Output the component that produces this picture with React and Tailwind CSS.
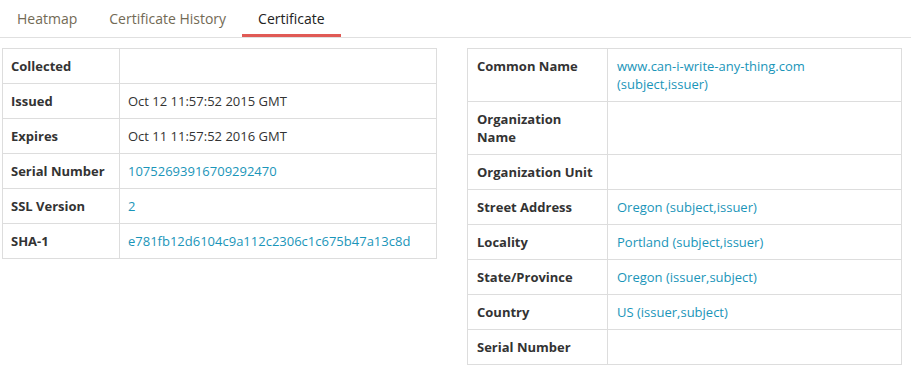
import React from 'react';

const tabs = ['Heatmap', 'Certificate History', 'Certificate'];

const leftRows = [
  { label: 'Collected', value: '' },
  { label: 'Issued', value: 'Oct 12 11:57:52 2015 GMT' },
  { label: 'Expires', value: 'Oct 11 11:57:52 2016 GMT' },
  { label: 'Serial Number', value: '10752693916709292470', link: true },
  { label: 'SSL Version', value: '2', link: true },
  { label: 'SHA-1', value: 'e781fb12d6104c9a112c2306c1c675b47a13c8d', link: true },
];

const rightRows = [
  { label: 'Common Name', value: ['www.can-i-write-any-thing.com', '(subject,issuer)'] },
  { label: 'Organization Name', value: [] },
  { label: 'Organization Unit', value: [] },
  { label: 'Street Address', value: ['Oregon (subject,issuer)'] },
  { label: 'Locality', value: ['Portland (subject,issuer)'] },
  { label: 'State/Province', value: ['Oregon (issuer,subject)'] },
  { label: 'Country', value: ['US (issuer,subject)'] },
  { label: 'Serial Number', value: [] },
];

const App = () => {
  return (
    <div className="w-[911px] h-[380px] bg-white text-[13px] leading-[18px] text-[#333]" style={{ fontFamily: '"Open Sans", sans-serif' }}>
      {/* Tabs */}
      <div className="flex pl-[1px] border-b border-[#e0e0e0] h-[38px]">
        {tabs.map((t, i) => {
          const active = i === 2;
          return (
            <div
              key={t}
              className={
                'px-[16px] pt-[9px] text-[14px] leading-[20px] ' +
                (active ? 'text-[#222] border-b-[3px] border-[#e05a55]' : 'text-[#736a55]')
              }
            >
              {t}
            </div>
          );
        })}
      </div>

      {/* Tables */}
      <div className="flex items-start pt-[10px] pl-[2px]">
        <table className="w-[435px] border-collapse border border-[#ddd]">
          <tbody>
            {leftRows.map((r) => (
              <tr key={r.label} className="h-[35px]">
                <td className="w-[117px] border border-[#ddd] px-2 py-2 font-bold text-[#333] align-top">{r.label}</td>
                <td className={'border border-[#ddd] px-2 py-2 align-top ' + (r.link ? 'text-[#1a95b9]' : 'text-[#333]')}>{r.value}</td>
              </tr>
            ))}
          </tbody>
        </table>

        <table className="ml-[30px] w-[435px] border-collapse border border-[#ddd]">
          <tbody>
            {rightRows.map((r) => (
              <tr key={r.label} className="h-[35px]">
                <td className="w-[140px] border border-[#ddd] pl-[9px] pr-2 py-2 font-bold text-[#333] align-top">{r.label}</td>
                <td className="border border-[#ddd] pl-[9px] pr-2 py-2 text-[#1a95b9] align-top">
                  {r.value.map((v) => (
                    <div key={v}>{v}</div>
                  ))}
                </td>
              </tr>
            ))}
          </tbody>
        </table>
      </div>
    </div>
  );
};

export default App;
